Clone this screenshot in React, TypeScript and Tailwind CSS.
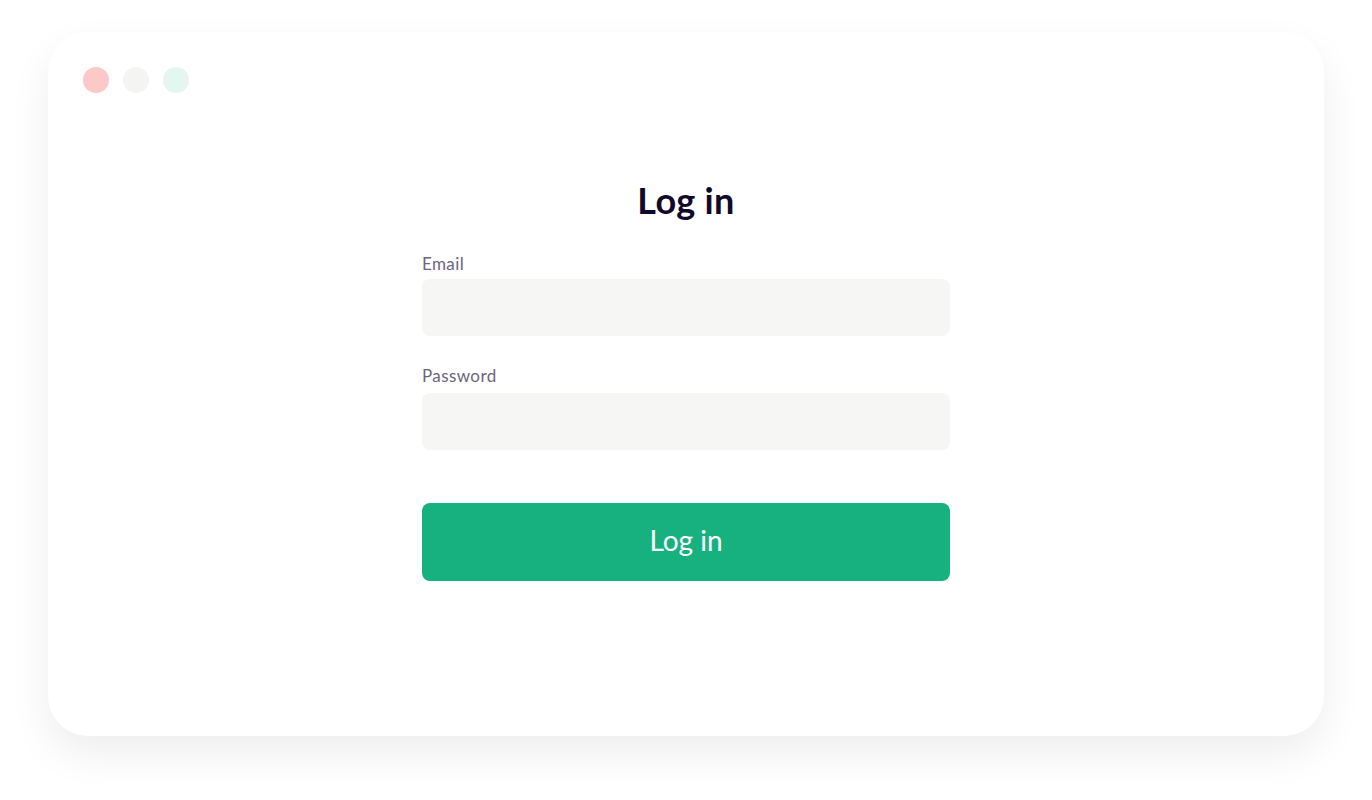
export default function App() {
  return (
    <div
      className="h-[800px] w-full bg-white px-12 pt-8"
      style={{ fontFamily: "Lato, 'Noto Sans', sans-serif" }}
    >
      <div className="h-[704px] rounded-[40px] bg-white shadow-[0_18px_40px_rgba(0,0,0,0.07)]">
        <div className="flex gap-[14px] pl-[35px] pt-[35px]">
          <span className="h-[26px] w-[26px] rounded-full bg-[#fdc9c8]" />
          <span className="h-[26px] w-[26px] rounded-full bg-[#f4f4f2]" />
          <span className="h-[26px] w-[26px] rounded-full bg-[#e3f6ef]" />
        </div>
        <div className="mx-auto mt-[87px] flex w-[528px] flex-col">
          <h1 className="text-center text-[36px] font-bold leading-[40px] tracking-[0.3px] text-[#12082a]">Log in</h1>
          <label className="mt-[32px] text-[17px] leading-[24px] tracking-[0.4px] text-[#6d6480]">Email</label>
          <div className="mt-[3px] h-[57px] rounded-lg bg-[#f6f6f4]" />
          <label className="mt-[28px] text-[17px] leading-[24px] tracking-[0.4px] text-[#6d6480]">Password</label>
          <div className="mt-[5px] h-[57px] rounded-lg bg-[#f6f6f4]" />
          <button
            type="button"
            className="mt-[53px] h-[78px] rounded-lg bg-[#16b17f] pb-1 text-[28px] text-white"
          >
            Log in
          </button>
        </div>
      </div>
    </div>
  );
}
